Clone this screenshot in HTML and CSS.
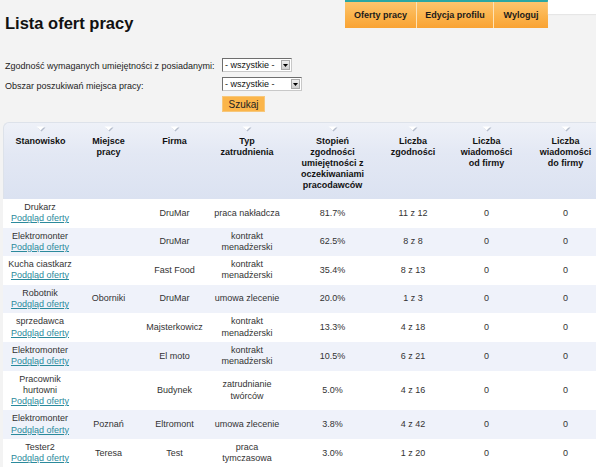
FILE: index.html
```html
<!DOCTYPE html>
<html lang="pl">
<head>
<meta charset="utf-8">
<title>Lista ofert pracy</title>
<link rel="stylesheet" href="styles.css">
</head>
<body>
<div class="top">
  <h1 class="title">Lista ofert pracy</h1>
  <nav class="nav">
    <a class="nav-btn w1" href="#">Oferty pracy</a>
    <a class="nav-btn w2" href="#">Edycja profilu</a>
    <a class="nav-btn w3" href="#">Wyloguj</a>
  </nav>
  <div class="corner"></div>
</div>

<form class="filters">
  <label class="lbl l1">Zgodność wymaganych umiejętności z posiadanymi:</label>
  <div class="sel s1"><span class="sel-text">- wszystkie -</span><span class="sel-arrow"><svg width="5" height="3" viewBox="0 0 5 3"><polygon points="0,0 5,0 2.5,3" fill="#000"/></svg></span></div>
  <label class="lbl l2">Obszar poszukiwań miejsca pracy:</label>
  <div class="sel s2"><span class="sel-text">- wszystkie -</span><span class="sel-arrow"><svg width="5" height="3" viewBox="0 0 5 3"><polygon points="0,0 5,0 2.5,3" fill="#000"/></svg></span></div>
  <span></span>
  <button type="button" class="btn">Szukaj</button>
</form>

<table class="offers">
  <colgroup>
    <col class="c1"><col class="c2"><col class="c3"><col class="c4"><col class="c5"><col class="c6"><col class="c7"><col class="c8">
  </colgroup>
  <thead>
    <tr>
      <th class="first"><span class="sort"><svg width="10" height="6" viewBox="0 0 10 6"><polygon points="1.5,1.5 9.5,1.5 5.5,5.5" fill="#b4bccb"/><polygon points="0.5,0.5 8.5,0.5 4.5,4.5" fill="#ffffff"/></svg></span>Stanowisko</th>
      <th><span class="sort"><svg width="10" height="6" viewBox="0 0 10 6"><polygon points="1.5,1.5 9.5,1.5 5.5,5.5" fill="#b4bccb"/><polygon points="0.5,0.5 8.5,0.5 4.5,4.5" fill="#ffffff"/></svg></span>Miejsce<br>pracy</th>
      <th><span class="sort"><svg width="10" height="6" viewBox="0 0 10 6"><polygon points="1.5,1.5 9.5,1.5 5.5,5.5" fill="#b4bccb"/><polygon points="0.5,0.5 8.5,0.5 4.5,4.5" fill="#ffffff"/></svg></span>Firma</th>
      <th><span class="sort"><svg width="10" height="6" viewBox="0 0 10 6"><polygon points="1.5,1.5 9.5,1.5 5.5,5.5" fill="#b4bccb"/><polygon points="0.5,0.5 8.5,0.5 4.5,4.5" fill="#ffffff"/></svg></span>Typ<br>zatrudnienia</th>
      <th><span class="sort"><svg width="10" height="6" viewBox="0 0 10 6"><polygon points="1.5,1.5 9.5,1.5 5.5,5.5" fill="#b4bccb"/><polygon points="0.5,0.5 8.5,0.5 4.5,4.5" fill="#ffffff"/></svg></span>Stopień<br>zgodności<br>umiejętności z<br>oczekiwaniami<br>pracodawców</th>
      <th><span class="sort"><svg width="10" height="6" viewBox="0 0 10 6"><polygon points="1.5,1.5 9.5,1.5 5.5,5.5" fill="#b4bccb"/><polygon points="0.5,0.5 8.5,0.5 4.5,4.5" fill="#ffffff"/></svg></span>Liczba<br>zgodności</th>
      <th><span class="sort"><svg width="10" height="6" viewBox="0 0 10 6"><polygon points="1.5,1.5 9.5,1.5 5.5,5.5" fill="#b4bccb"/><polygon points="0.5,0.5 8.5,0.5 4.5,4.5" fill="#ffffff"/></svg></span>Liczba<br>wiadomości<br>od firmy</th>
      <th><span class="sort"><svg width="10" height="6" viewBox="0 0 10 6"><polygon points="1.5,1.5 9.5,1.5 5.5,5.5" fill="#b4bccb"/><polygon points="0.5,0.5 8.5,0.5 4.5,4.5" fill="#ffffff"/></svg></span>Liczba<br>wiadomości<br>do firmy</th>
    </tr>
  </thead>
  <tbody>
    <tr><td>Drukarz<br><a href="#">Podgląd oferty</a></td><td></td><td>DruMar</td><td>praca nakładcza</td><td>81.7%</td><td>11 z 12</td><td>0</td><td>0</td></tr>
    <tr><td>Elektromonter<br><a href="#">Podgląd oferty</a></td><td></td><td>DruMar</td><td>kontrakt<br>menadżerski</td><td>62.5%</td><td>8 z 8</td><td>0</td><td>0</td></tr>
    <tr><td>Kucha ciastkarz<br><a href="#">Podgląd oferty</a></td><td></td><td>Fast Food</td><td>kontrakt<br>menadżerski</td><td>35.4%</td><td>8 z 13</td><td>0</td><td>0</td></tr>
    <tr><td>Robotnik<br><a href="#">Podgląd oferty</a></td><td>Oborniki</td><td>DruMar</td><td>umowa zlecenie</td><td>20.0%</td><td>1 z 3</td><td>0</td><td>0</td></tr>
    <tr><td>sprzedawca<br><a href="#">Podgląd oferty</a></td><td></td><td>Majsterkowicz</td><td>kontrakt<br>menadżerski</td><td>13.3%</td><td>4 z 18</td><td>0</td><td>0</td></tr>
    <tr><td>Elektromonter<br><a href="#">Podgląd oferty</a></td><td></td><td>El moto</td><td>kontrakt<br>menadżerski</td><td>10.5%</td><td>6 z 21</td><td>0</td><td>0</td></tr>
    <tr><td>Pracownik<br>hurtowni<br><a href="#">Podgląd oferty</a></td><td></td><td>Budynek</td><td>zatrudnianie<br>twórców</td><td>5.0%</td><td>4 z 16</td><td>0</td><td>0</td></tr>
    <tr><td>Elektromonter<br><a href="#">Podgląd oferty</a></td><td>Poznań</td><td>Eltromont</td><td>umowa zlecenie</td><td>3.8%</td><td>4 z 42</td><td>0</td><td>0</td></tr>
    <tr><td>Tester2<br><a href="#">Podgląd oferty</a></td><td>Teresa</td><td>Test</td><td>praca<br>tymczasowa</td><td>3.0%</td><td>1 z 20</td><td>0</td><td>0</td></tr>
    <tr><td>&nbsp;<br>&nbsp;</td><td></td><td></td><td></td><td></td><td></td><td></td><td></td></tr>
  </tbody>
</table>
</body>
</html>
```

FILE: styles.css
```css
html, body {
  margin: 0;
  padding: 0;
  overflow: hidden;
}
body {
  background: #f3f3f3;
  font-family: "Liberation Sans", Arial, sans-serif;
  font-size: 9px;
  color: #333;
  width: 596px;
}
.top {
  display: flex;
  align-items: flex-start;
  height: 28px;
}
.title {
  flex: 1;
  margin: 0;
  padding: 15px 0 0 5px;
  font-size: 16.5px;
  line-height: 17px;
  font-weight: bold;
  color: #111;
}
.nav {
  display: flex;
  border-top: 2px solid #2ba7a3;
  height: 26px;
}
.nav-btn {
  display: flex;
  align-items: center;
  justify-content: center;
  height: 26px;
  background: linear-gradient(#fec56e, #fbb24a 55%, #f9a334);
  color: #1a1a1a;
  font-weight: bold;
  font-size: 9px;
  text-decoration: none;
  border-right: 1px solid #fde2b6;
  box-sizing: border-box;
}
.nav-btn.w3 { border-right: none; }
.w1 { width: 72px; }
.w2 { width: 77px; }
.w3 { width: 54px; }
.corner {
  width: 48px;
  height: 14px;
  background: #ffffff;
  box-shadow: 0 1px 1px #e6e6e6;
}

.filters {
  display: grid;
  grid-template-columns: 217px auto;
  grid-template-rows: 14px 14px 16px;
  row-gap: 5px;
  margin: 30px 0 0 5px;
  justify-items: start;
}
.lbl {
  font-size: 9px;
  color: #222;
  line-height: 11px;
  padding-top: 3px;
}
.l2 { padding-top: 4px; }
.sel {
  display: flex;
  align-items: center;
  height: 14px;
  box-sizing: border-box;
  border: 1px solid #6e6e6e;
  border-right-color: #c8c8c8;
  border-bottom-color: #c8c8c8;
  background: #fff;
  padding: 0 1px 0 2px;
  font-size: 9px;
  color: #111;
}
.s1 { width: 70px; }
.s2 { width: 80px; }
.sel-text { flex: 1; line-height: 11px; }
.sel-arrow {
  width: 9px;
  height: 10px;
  display: flex;
  align-items: center;
  justify-content: center;
  background: linear-gradient(#eeeeee, #cfcfcf);
  border: 1px solid #a9a9a9;
  box-sizing: border-box;
}
.btn {
  width: 43px;
  height: 16px;
  padding: 0;
  border: 1px solid #f7c77a;
  background: #fbb54a;
  font-family: "Liberation Sans", Arial, sans-serif;
  font-size: 10px;
  color: #222;
}

.offers {
  margin: 10px 0 0 3px;
  border-collapse: separate;
  border-spacing: 0;
  table-layout: fixed;
  width: 601px;
}
.c1 { width: 74px; }
.c2 { width: 63px; }
.c3 { width: 69px; }
.c4 { width: 76px; }
.c5 { width: 95px; }
.c6 { width: 66px; }
.c7 { width: 81px; }
.c8 { width: 77px; }
.offers th {
  background: linear-gradient(#eef1f8, #e3e8f4 40%, #dbe2f1);
  border-top: 1px solid #dde2ea;
  vertical-align: top;
  text-align: center;
  font-size: 9px;
  font-weight: bold;
  color: #111;
  line-height: 11px;
  padding: 3px 0 6px;
  white-space: nowrap;
  height: 67px;
}
.offers th.first {
  border-top-left-radius: 6px;
  border-left: 1px solid #dde2ea;
}
.sort {
  display: block;
  height: 10px;
  line-height: 0;
}
.sort svg { display: inline-block; }
.offers td {
  text-align: center;
  vertical-align: middle;
  line-height: 11.3px;
  padding: 3px 0;
  white-space: nowrap;
  color: #333;
}
.offers tbody tr:nth-child(odd) td { background: #ffffff; }
.offers tbody tr:nth-child(even) td { background: #eff2fa; }
.offers a {
  color: #2b8a9c;
  text-decoration: underline;
}
```
